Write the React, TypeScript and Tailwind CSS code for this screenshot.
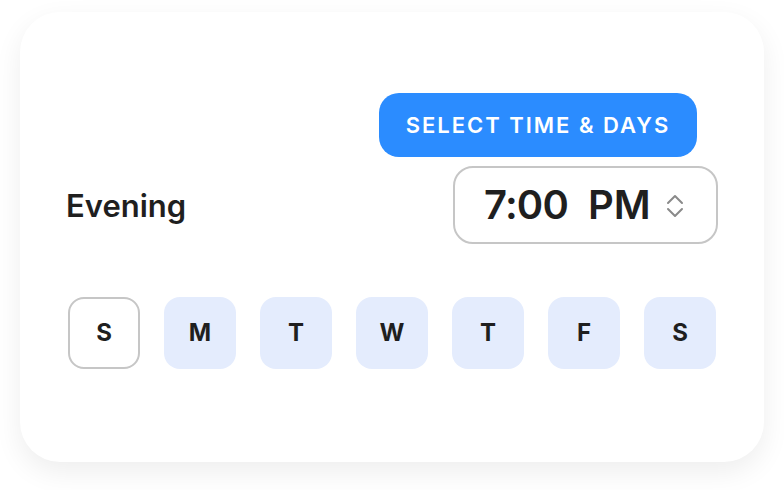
import React from "react";

const days = ["S", "M", "T", "W", "T", "F", "S"];

function UpDown() {
  return (
    <svg width="22" height="28" viewBox="0 0 22 28" fill="none" className="text-[#8a8a8a]">
      <path d="M4 11 L11 4 L18 11" stroke="currentColor" strokeWidth="2" strokeLinecap="round" strokeLinejoin="round" />
      <path d="M4 17 L11 24 L18 17" stroke="currentColor" strokeWidth="2" strokeLinecap="round" strokeLinejoin="round" />
    </svg>
  );
}

export default function App() {
  return (
    <div className="w-[784px] h-[490px] bg-white pt-[12px] pl-[20px] font-['Inter','Liberation_Sans',sans-serif]">
      <div className="w-[744px] h-[450px] rounded-[40px] bg-white shadow-[0_10px_28px_rgba(0,0,0,0.07)] px-[46px] pt-[81px]">
        <div className="flex justify-end pr-[21px]">
          <button className="h-[64px] w-[318px] rounded-[20px] bg-[#2b8cff] text-white text-[22px] font-semibold tracking-[0.09em]">
            SELECT TIME &amp; DAYS
          </button>
        </div>

        <div className="flex items-center justify-between mt-[9px]">
          <span className="text-[31px] font-semibold text-[#1f1f1f] mt-[3px]">Evening</span>
          <div className="h-[78px] w-[265px] rounded-[20px] border-2 border-[#c6c6c6] flex items-center pl-[29px]">
            <span className="text-[40px] font-semibold text-[#1f1f1f] tracking-[-0.02em]">7:00</span>
            <span className="text-[40px] font-semibold text-[#1f1f1f] ml-[20px]">PM</span>
            <span className="ml-[13px] mt-[1px]">
              <UpDown />
            </span>
          </div>
        </div>

        <div className="flex gap-[24px] mt-[53px] pl-[2px]">
          {days.map((d, i) => (
            <div
              key={i}
              className={
                i === 0
                  ? "w-[72px] h-[72px] rounded-[16px] border-2 border-[#c6c6c6] bg-white flex items-center justify-center text-[24px] font-bold text-[#1f1f1f]"
                  : "w-[72px] h-[72px] rounded-[16px] bg-[#e4ecfd] flex items-center justify-center text-[24px] font-bold text-[#1f1f1f]"
              }
            >
              {d}
            </div>
          ))}
        </div>
      </div>
    </div>
  );
}
